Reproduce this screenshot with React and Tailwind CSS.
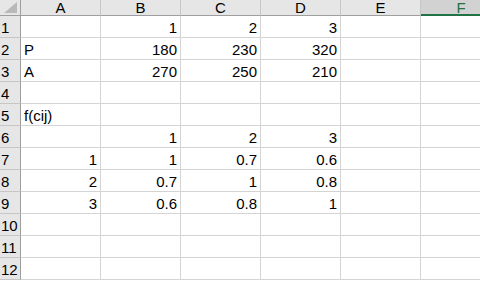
import React from "react";

const cols = ["A", "B", "C", "D", "E", "F"];

const rows = [
  ["", "1", "2", "3", "", ""],
  ["P", "180", "230", "320", "", ""],
  ["A", "270", "250", "210", "", ""],
  ["", "", "", "", "", ""],
  ["f(cij)", "", "", "", "", ""],
  ["", "1", "2", "3", "", ""],
  ["1", "1", "0.7", "0.6", "", ""],
  ["2", "0.7", "1", "0.8", "", ""],
  ["3", "0.6", "0.8", "1", "", ""],
  ["", "", "", "", "", ""],
  ["", "", "", "", "", ""],
  ["", "", "", "", "", ""],
];

const isNum = (v) => v !== "" && !isNaN(Number(v));

export default function App() {
  return (
    <div
      className="w-[480px] h-[281px] overflow-hidden bg-white text-[15px] text-black"
      style={{ fontFamily: '"Liberation Sans", Arial, sans-serif' }}
    >
      <div className="flex h-[16px]">
        <div className="w-[21px] shrink-0 h-[16px] bg-[#e6e6e6] border-r border-b border-[#9e9e9e] flex items-end justify-end pr-[3px] pb-[2px]">
          <div className="w-0 h-0 border-l-[13px] border-l-transparent border-b-[11px] border-b-[#b9b9b9]" />
        </div>
        {cols.map((c) => {
          const sel = c === "F";
          return (
            <div
              key={c}
              className={
                sel
                  ? "w-[80px] shrink-0 h-[16px] bg-[#d2d2d2] border-b-2 border-[#217346] text-[#217346] flex items-center justify-center leading-none"
                  : "w-[80px] shrink-0 h-[16px] bg-[#e6e6e6] border-r border-r-[#c6c6c6] border-b border-b-[#9e9e9e] flex items-center justify-center leading-none"
              }
            >
              {c}
            </div>
          );
        })}
      </div>
      {rows.map((r, i) => (
        <div key={i} className="flex h-[22px]">
          <div className="w-[21px] shrink-0 h-[22px] bg-[#e6e6e6] border-r border-b border-r-[#9e9e9e] border-b-[#c6c6c6] flex items-end pb-[2px] pl-px leading-none">
            {i + 1}
          </div>
          {r.map((v, j) => (
            <div
              key={j}
              className={
                "w-[80px] shrink-0 h-[22px] border-r border-b border-[#d4d4d4] flex items-end pb-[2px] leading-none whitespace-nowrap " +
                (isNum(v) ? "justify-end pr-[3px]" : "justify-start pl-[3px]")
              }
            >
              {v}
            </div>
          ))}
        </div>
      ))}
    </div>
  );
}
